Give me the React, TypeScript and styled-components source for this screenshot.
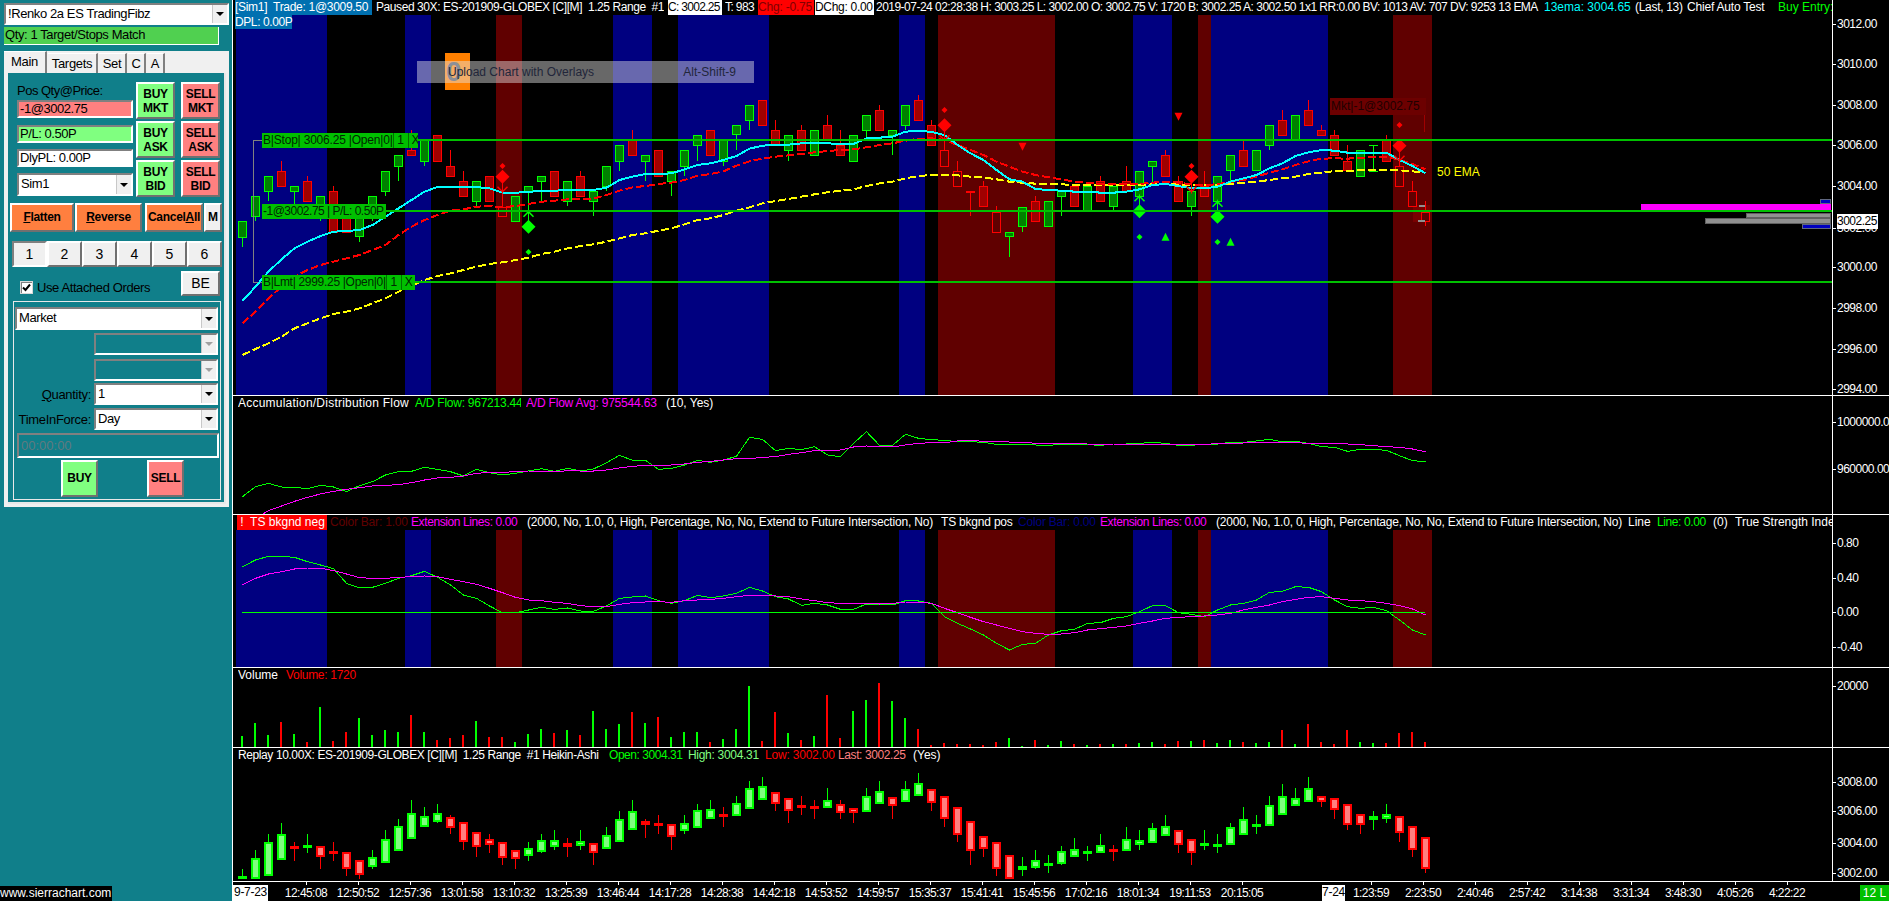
import React from "react";
import styled, { createGlobalStyle } from "styled-components";

const Global = createGlobalStyle`
  html, body { margin: 0; padding: 0; background: #000; overflow: hidden; }
  body { font-family: "Liberation Sans", Arial, sans-serif; }
  * { box-sizing: border-box; }
`;

const TEAL = "#107f8a";
const FACE = "#f0f0f0";
const sunken = "border: 2px solid; border-color: #808080 #fff #fff #808080;";
const raised = "border: 2px solid; border-color: #fff #707070 #707070 #fff;";

/* ------------------------------ layout ----------------------------- */
const Page = styled.div`
  display: flex;
  width: 1889px;
  height: 901px;
  background: #000;
  overflow: hidden;
`;
const Sidebar = styled.aside`
  flex: 0 0 232px;
  height: 901px;
  display: flex;
  flex-direction: column;
  background: ${TEAL};
  color: #000;
  font-size: 13px;
`;
const ChartArea = styled.main`
  flex: 1;
  display: flex;
  flex-direction: column;
  border-left: 1px solid #fff;
  min-width: 0;
`;
const Pane = styled.section<{ $h: number }>`
  display: flex;
  flex: 0 0 ${(p) => p.$h}px;
  height: ${(p) => p.$h}px;
  border-bottom: 1px solid #fff;
`;
const Plot = styled.div`
  position: relative;
  flex: 0 0 1599px;
  width: 1599px;
  display: flex;
  flex-direction: column;
  overflow: hidden;
`;
const Graph = styled.svg`
  display: block;
  flex: 1;
  min-height: 0;
  width: 1599px;
`;
const Axis = styled.div`
  position: relative;
  flex: 1;
  border-left: 1px solid #fff;
  overflow: hidden;
  font-size: 12px;
  color: #fff;
`;
const AxisMark = styled.span`
  position: absolute;
  left: 4px;
  transform: translateY(-50%);
  white-space: nowrap;
  line-height: 14px;
  letter-spacing: -0.5px;
  &::before {
    content: "";
    position: absolute;
    left: -4px;
    top: 7px;
    width: 3px;
    height: 1px;
    background: #fff;
  }
`;
const PriceTag = styled.span`
  position: absolute;
  left: 4px;
  top: 214px;
  width: 41px;
  height: 15px;
  line-height: 15px;
  background: #fff;
  color: #000;
  letter-spacing: -0.5px;
`;

/* ------------------------------ legends ---------------------------- */
const Legend = styled.div`
  flex: 0 0 15px;
  height: 15px;
  display: flex;
  font-size: 12px;
  line-height: 15px;
  white-space: pre;
  overflow: hidden;
`;
const Chip = styled.span<{ $ml: number; $w: number; $bg?: string; $c?: string; $ls?: number }>`
  flex: 0 0 ${(p) => p.$w}px;
  width: ${(p) => p.$w}px;
  margin-left: ${(p) => p.$ml}px;
  background: ${(p) => p.$bg ?? "transparent"};
  color: ${(p) => p.$c ?? "#fff"};
  letter-spacing: ${(p) => p.$ls ?? 0}px;
  overflow: hidden;
`;
const DplTag = styled.div`
  position: absolute;
  left: 2px;
  top: 15px;
  width: 57px;
  height: 14px;
  line-height: 14px;
  font-size: 12px;
  letter-spacing: -0.4px;
  white-space: nowrap;
  background: #0070b0;
  color: #fff;
`;

/* ------------------------------ overlays --------------------------- */
const OrderTag = styled.div<{ $top: number; $w: number }>`
  position: absolute;
  left: 29px;
  top: ${(p) => p.$top}px;
  width: ${(p) => p.$w}px;
  height: 15px;
  display: flex;
  background: #00c000;
  color: #002800;
  font-size: 12px;
  line-height: 15px;
  white-space: pre;
  overflow: hidden;
`;
const OrderCell = styled.span<{ $w: number }>`
  flex: 0 0 ${(p) => p.$w}px;
  width: ${(p) => p.$w}px;
  text-align: center;
  border-left: 1px solid #007000;
`;
const OrderMain = styled.span<{ $ls: number }>`
  flex: 1;
  padding-left: 1px;
  letter-spacing: ${(p) => p.$ls}px;
`;
const FillTag = styled.div`
  position: absolute;
  left: 1097px;
  top: 98px;
  width: 96px;
  height: 17px;
  line-height: 17px;
  font-size: 12px;
  background: #6c0000;
  color: #200000;
  padding-left: 1px;
  white-space: pre;
  overflow: hidden;
`;
const EmaTag = styled.span`
  position: absolute;
  left: 1204px;
  top: 165px;
  font-size: 12px;
  line-height: 15px;
  color: #ffff00;
`;
const OrangeBadge = styled.div`
  position: absolute;
  left: 212px;
  top: 53px;
  width: 25px;
  height: 37px;
  padding-left: 1px;
  background: #ff8000;
  color: #404858;
  font-weight: bold;
  font-size: 28px;
  line-height: 37px;
`;
const HintBar = styled.div`
  position: absolute;
  left: 184px;
  top: 61px;
  width: 337px;
  height: 22px;
  display: flex;
  justify-content: space-between;
  padding: 0 18px 0 31px;
  background: rgba(230, 230, 230, 0.45);
  color: #22263a;
  font-size: 12px;
  line-height: 22px;
`;

/* ------------------------------ time axis -------------------------- */
const TimeRow = styled.footer`
  flex: 0 0 19px;
  height: 19px;
  display: flex;
  font-size: 12px;
  color: #fff;
  line-height: 17px;
  white-space: nowrap;
`;
const DateTag = styled.span<{ $w: number; $ml?: number }>`
  flex: 0 0 ${(p) => p.$w}px;
  width: ${(p) => p.$w}px;
  height: 16px;
  margin-top: 3px;
  margin-left: ${(p) => p.$ml ?? 0}px;
  background: #fff;
  color: #000;
  line-height: 15px;
  text-align: center;
  letter-spacing: -0.3px;
`;
const TimeGap = styled.span<{ $w: number }>`
  flex: 0 0 ${(p) => p.$w}px;
`;
const TimeCell = styled.span`
  position: relative;
  flex: 0 0 52px;
  width: 52px;
  padding-top: 3px;
  text-align: center;
  letter-spacing: -0.55px;
  &::before {
    content: "";
    position: absolute;
    left: 26px;
    top: 0;
    width: 1px;
    height: 3px;
    background: #fff;
  }
`;
const BarCount = styled.span`
  margin-left: auto;
  flex: 0 0 29px;
  height: 16px;
  margin-top: 3px;
  background: #00c000;
  color: #fff;
  text-align: center;
  line-height: 16px;
`;

/* ------------------------------ sidebar ---------------------------- */
const Combo = styled.div<{ $w: number; $h?: number; $off?: boolean; $ml?: number; $mt?: number }>`
  position: relative;
  flex: none;
  width: ${(p) => p.$w}px;
  height: ${(p) => p.$h ?? 22}px;
  margin-left: ${(p) => p.$ml ?? 0}px;
  margin-top: ${(p) => p.$mt ?? 0}px;
  ${sunken}
  background: ${(p) => (p.$off ? TEAL : "#fff")};
  padding-left: 2px;
  line-height: 18px;
  font-size: 13px;
  letter-spacing: -0.4px;
  white-space: nowrap;
  display: flex;
  justify-content: space-between;
`;
const ComboArrow = styled.span<{ $off?: boolean }>`
  flex: 0 0 15px;
  width: 15px;
  height: 100%;
  background: ${FACE};
  border-left: 1px solid #c8c8c8;
  display: flex;
  align-items: center;
  justify-content: center;
  &::after {
    content: "";
    border-left: 4px solid transparent;
    border-right: 4px solid transparent;
    border-top: 4px solid ${(p) => (p.$off ? "#a0a0a0" : "#000")};
  }
`;
const Status = styled.div`
  flex: 0 0 18px;
  margin: 2px 0 0 4px;
  width: 215px;
  background: #50d050;
  border-right: 1px solid #fff;
  border-bottom: 1px solid #fff;
  font-size: 13px;
  letter-spacing: -0.4px;
  line-height: 16px;
  padding-left: 1px;
  white-space: nowrap;
  overflow: hidden;
`;
const TabFrame = styled.div`
  flex: 0 0 456px;
  width: 225px;
  margin: 6px 0 0 4px;
  background: ${FACE};
  display: flex;
  flex-direction: column;
`;
const TabStrip = styled.div`
  flex: 0 0 22px;
  display: flex;
  align-items: flex-end;
  gap: 1px;
`;
const Tab = styled.div<{ $w: number; $on?: boolean }>`
  flex: 0 0 ${(p) => p.$w}px;
  height: ${(p) => (p.$on ? 22 : 20)}px;
  background: ${FACE};
  border-right: 2px solid #808080;
  border-top: 1px solid #fff;
  text-align: center;
  font-size: 13px;
  letter-spacing: -0.3px;
  line-height: ${(p) => (p.$on ? 20 : 19)}px;
`;
const TabBody = styled.div`
  flex: 1;
  margin: 0 3px 3px 4px;
  background: ${TEAL};
  border-right: 2px solid #e8e8e8;
  border-bottom: 2px solid #e8e8e8;
  display: flex;
  flex-direction: column;
`;
const TopBlock = styled.div`
  display: flex;
  margin: 9px 0 0 9px;
  height: 116px;
`;
const PosColumn = styled.div`
  flex: 0 0 116px;
  display: flex;
  flex-direction: column;
`;
const FieldCaption = styled.div`
  flex: 0 0 18px;
  font-size: 13px;
  letter-spacing: -0.5px;
  line-height: 15px;
  padding-top: 1px;
`;
const Field = styled.div<{ $bg: string; $mt?: number }>`
  flex: 0 0 18px;
  margin-top: ${(p) => p.$mt ?? 0}px;
  ${sunken}
  background: ${(p) => p.$bg};
  font-size: 13px;
  letter-spacing: -0.45px;
  line-height: 14px;
  padding-left: 1px;
  white-space: nowrap;
`;
const OrderColumn = styled.div<{ $ml: number }>`
  flex: 0 0 39px;
  margin-left: ${(p) => p.$ml}px;
  display: flex;
  flex-direction: column;
  gap: 2px;
`;
const OrderButton = styled.div<{ $bg: string }>`
  flex: 0 0 37px;
  ${raised}
  background: ${(p) => p.$bg};
  font-weight: bold;
  font-size: 12px;
  line-height: 14px;
  text-align: center;
  padding-top: 3px;
  letter-spacing: -0.3px;
`;
const ActionRow = styled.div`
  display: flex;
  margin: 5px 0 0 2px;
  height: 29px;
`;
const ActionButton = styled.div<{ $w: number; $ml?: number; $plain?: boolean }>`
  flex: 0 0 ${(p) => p.$w}px;
  margin-left: ${(p) => p.$ml ?? 0}px;
  ${raised}
  background: ${(p) => (p.$plain ? FACE : "#ff7f3f")};
  font-weight: bold;
  font-size: 12px;
  line-height: 25px;
  text-align: center;
  letter-spacing: ${(p) => (p.$plain ? 0 : -0.3)}px;
  white-space: nowrap;
`;
const SlotRow = styled.div`
  display: flex;
  margin: 9px 0 0 4px;
  height: 26px;
`;
const SlotButton = styled.div<{ $on?: boolean }>`
  flex: 0 0 35px;
  ${(p) => (p.$on ? "border: 2px solid; border-color: #808080 #fff #fff #808080;" : raised)}
  background: ${FACE};
  font-size: 14px;
  line-height: 22px;
  text-align: center;
`;
const AttachRow = styled.div`
  display: flex;
  align-items: flex-start;
  margin: 4px 0 0 12px;
  height: 25px;
`;
const CheckBox = styled.span`
  flex: 0 0 13px;
  height: 13px;
  margin-top: 10px;
  background: #fff;
  border: 1px solid #d8d8d8;
  box-shadow: inset 1px 1px 0 #808080;
  display: flex;
  align-items: center;
  justify-content: center;
`;
const CheckLabel = styled.span`
  margin: 9px 0 0 4px;
  font-size: 13px;
  letter-spacing: -0.4px;
  line-height: 15px;
  white-space: nowrap;
  flex: 1;
`;
const BeButton = styled.div`
  flex: 0 0 39px;
  height: 25px;
  margin-right: 4px;
  ${raised}
  background: ${FACE};
  font-size: 14px;
  line-height: 20px;
  text-align: center;
`;
const GroupBox = styled.div`
  width: 208px;
  height: 199px;
  margin: 5px 0 0 5px;
  border: 1px solid #e8e8e8;
  padding: 5px 0 0 1px;
  display: flex;
  flex-direction: column;
`;
const FormRow = styled.div<{ $mt: number }>`
  display: flex;
  align-items: center;
  justify-content: flex-end;
  margin: ${(p) => p.$mt}px 2px 0 0;
  height: 22px;
  flex: 0 0 22px;
`;
const FormLabel = styled.span`
  font-size: 13px;
  letter-spacing: -0.3px;
  margin-right: 3px;
  white-space: nowrap;
`;
const TimeField = styled.div`
  flex: 0 0 25px;
  margin: 3px 1px 0 2px;
  ${sunken}
  color: #607a80;
  font-size: 13px;
  line-height: 21px;
  padding-left: 2px;
`;
const SubmitRow = styled.div`
  display: flex;
  margin: 2px 0 0 46px;
  gap: 49px;
`;
const SubmitButton = styled.div<{ $bg: string }>`
  flex: 0 0 37px;
  height: 37px;
  ${raised}
  background: ${(p) => p.$bg};
  font-weight: bold;
  font-size: 12px;
  letter-spacing: -0.3px;
  line-height: 33px;
  text-align: center;
`;
const SiteTag = styled.div`
  margin-top: auto;
  width: 112px;
  height: 15px;
  background: #000;
  color: #fff;
  font-size: 12px;
  line-height: 15px;
  white-space: nowrap;
`;

/* -------------------------------- data ----------------------------- */
type Bar = [string, number, number, number?, number?, number?];
const X = (i: number) => 242.5 + 13 * i;
const mainBars: Bar[] = [
  ["g",664,713,0,740],["g",589,650,0,662],["g",529,575,0,603],["r",514,560,484],["g",559,575,0,612],["r",544,605,529],["g",589,635,0,662],["r",574,698,559],
  ["r",650,698],["g",650,712,0,725],["g",589,650,0,662],["g",514,575,0,587],["g",466,500,0,543],["r",451,467,390],["g",420,485,0,497],["r",405,485],
  ["r",499,530,450],["r",544,590,514],["g",544,605,0,620],["r",529,605],["r",620,650,575,0,1],["g",589,665],["g",559,575,0,635],["g",529,545,0,603],
  ["r",514,590],["g",544,605,0,617],["r",529,590,514],["g",574,605,0,647],["g",499,560,0,572],["g",436,485,0,512],["r",420,467,390],["g",466,485,0,543],
  ["r",451,530],["g",514,545,0,587],["g",451,500,0,527],["g",405,437,0,483],["r",390,467],["g",420,485,0,497],["g",375,405,0,450],["g",315,362,0,390],
  ["r",300,377],["r",390,435,360],["g",405,452,0,483],["r",390,452,375],["g",390,467],["r",375,420,345],["r",436,467,390],["g",405,485],
  ["g",345,392,0,420],["r",330,392,315],["g",390,407,0,465],["g",315,377,0,390],["r",300,362,285],["r",375,437,360],["r",450,500,405,0,1],["r",514,560,484,0,1],
  ["r",574,576,574,647],["r",558,620,543],["r",635,698,618,0,1],["g",697,712,0,770],["g",620,680,0,695],["r",604,665,588],["g",604,680],["g",574,590,0,647],
  ["r",559,620],["g",559,632],["r",544,605,529],["g",559,620,0,632],["r",544,575,499],["g",514,590],["g",484,500,0,545],["r",466,530,450],
  ["r",544,605,529],["g",574,620,0,647],["r",559,590,514],["g",529,605],["g",466,514,0,545],["r",451,500,423],["g",451,514],["g",376,437,0,450],
  ["r",360,407,330],["g",345,420],["r",330,377,300],["r",390,407,375],["r",405,467,390],["r",484,512,435],["g",451,530],["g",436,512,436,512,2],
  ["r",420,485,405],["r",498,560,465,0,1],["r",574,620,544,0,1],["r",635,665,604,678,1],
];
const haBars: Bar[] = [
  ["g",408,416,388],["g",355,417,330],["g",307,407,282],["g",283,359,250],["r",319,326,307,362],["g",316,323,282,338],["r",319,350,0,387],["r",333,339,306,362],
  ["r",337,388,0,407],["r",361,404,0,416],["g",352,382,330,386],["g",298,368,270],["g",259,334,237],["g",220,296,180],["g",229,260,202],["g",220,245,192,248],
  ["r",232,265,225,282],["r",247,307,0,330],["r",277,322,0,350],["r",298,314,282,338],["r",307,355,0,374],["r",331,358,0,386],["g",325,347,306,362],["g",301,335,282,338],
  ["g",301,320,270,330],["r",310,322,294,351],["g",304,317,270,329],["r",310,338,0,374],["g",286,326,262],["g",238,305,213],["g",214,271,180],["r",244,256,237,294],
  ["r",250,257,225,282],["r",253,292,0,330],["g",250,272,225,282],["g",211,263,192],["g",208,236,180],["r",223,230,200,262],["g",190,227,168],["g",145,208,123],
  ["g",139,179,111],["r",157,193,0,213],["r",175,214,0,250],["r",196,199,168,225],["r",199,208,180,237],["g",181,203,145],["r",193,218,180,237],["r",205,220,0,250],
  ["g",169,215,145],["g",154,191,123],["r",172,197,0,238],["g",148,185,123],["g",130,167,99],["r",148,190,0,213],["r",169,238,0,261],["r",202,284,0,306],
  ["r",244,334,0,375],["r",289,328,0,351],["r",307,386,0,407],["r",346,417],["g",379,389,351,407],["g",361,383,330,386],["g",370,374,345,398],["g",334,372,318,374],
  ["g",328,352,294],["g",334,341,318,362],["g",316,338,282],["r",328,334,316,362],["g",298,332,262],["g",301,314,270,330],["g",265,308,250],["g",259,287,225],
  ["r",271,316,0,339],["r",296,340,0,374],["g",310,317,270,330],["g",312,314,282,338],["g",262,314,250],["g",238,286,202],["g",253,262,225,282],["g",196,257,168],
  ["g",169,226,132],["g",175,197,145],["g",145,187,111],["r",167,187,0,200],["r",175,211,0,237],["r",193,254,0,270],["r",223,256,0,282],["g",229,239,213,270],
  ["g",223,236,192,250],["r",229,280,0,306],["r",257,331,0,351],["r",292,387,0,398],
];
const cyan = [903,860,815,778,745,725,708,695,693,690,675,650,625,600,575,561,561,561,561,565,578,578,576,572,572,570,570,570,563,540,530,522,522,520,508,495,490,480,468,446,437,434,434,430,428,430,432,432,415,413,410,395,392,396,405,435,460,480,510,538,545,567,570,572,575,575,578,578,575,568,555,552,558,565,565,560,545,535,525,505,490,468,457,450,452,458,458,458,458,480,498,520];
const redEma = [970,935,895,860,830,810,795,785,775,765,750,735,705,680,660,645,632,628,620,618,622,618,612,605,602,598,596,596,585,572,562,558,552,548,540,527,522,514,497,484,476,470,466,462,457,453,450,448,442,435,430,422,416,415,420,435,450,465,485,500,515,525,532,538,545,548,552,552,552,552,548,545,548,553,556,552,546,540,530,518,508,495,484,476,475,476,473,472,470,480,492,508];
const yellow = [1065,1047,1030,1010,985,970,955,942,935,925,910,895,875,858,840,828,820,810,800,792,787,780,773,762,755,745,738,733,725,715,705,700,692,685,673,660,655,645,632,622,610,603,597,590,583,577,572,568,558,550,545,535,528,525,524,526,530,532,538,545,548,551,552,553,555,556,556,556,556,556,553,552,553,555,555,555,551,549,545,540,535,530,522,518,513,512,511,510,510,511,514,518];
const adGreen = [320,290,280,291,292,296,286,291,305,287,275,255,245,244,232,238,245,258,238,248,255,250,243,236,244,235,243,237,218,196,211,211,238,235,225,211,217,210,199,142,148,182,175,179,170,195,200,160,125,166,166,133,145,149,151,155,155,157,163,163,163,165,166,163,163,164,166,162,162,160,157,160,166,166,162,162,157,157,153,148,156,154,160,170,172,184,178,178,181,197,212,215];
const adPurple = [400,385,362,348,334,322,312,304,298,293,288,286,284,278,270,264,262,258,250,247,247,245,243,243,246,242,243,243,240,234,229,226,226,225,222,217,214,210,206,206,202,200,193,188,182,182,180,171,168,170,171,165,160,158,158,153,151,154,155,156,156,160,160,160,161,162,163,162,162,162,162,162,163,163,163,161,161,159,158,157,157,158,160,160,160,162,164,167,170,172,177,185];
const tsGreen = [530,510,499,499,502,515,525,536,580,594,592,580,565,557,544,562,585,615,625,648,668,668,660,652,658,654,663,664,648,625,621,618,632,640,632,616,623,618,610,592,603,620,627,646,640,645,658,658,642,642,645,632,633,640,680,700,717,735,760,780,763,760,735,722,718,700,698,685,680,665,647,647,668,673,680,660,645,640,630,607,604,590,592,605,630,650,655,652,662,690,720,735];
const tsPurple = [584,565,552,545,537,534,534,542,552,563,565,565,562,560,558,560,568,575,583,595,608,622,630,632,637,640,647,650,650,643,638,636,635,637,632,630,628,625,620,616,616,618,620,627,632,638,640,640,640,642,640,636,636,640,655,668,682,695,705,715,725,730,733,732,728,720,716,712,708,700,693,685,682,680,678,675,670,660,652,645,635,628,622,620,625,630,632,635,640,647,657,675];
const vol: [string, number][] = "g213 g174 g210 r171 g207 r231 g126 r228 r201 g159 g210 g195 g201 r150 g201 r225 r219 r210 g168 r216 r216 g231 g207 g192 r204 g195 r210 g138 g192 g177 r141 g174 r156 g216 g201 g201 r231 g222 g192 g63 r228 r141 g204 r225 g213 r90 r219 g138 g105 r54 g108 g159 r192 r240 r234 r237 r237 r240 r231 g219 g243 r225 g240 g228 r237 g240 r237 g237 r237 g234 g231 r237 r228 g228 r225 g234 g225 r231 g234 g231 r195 g237 r177 r231 r237 r195 g231 g234 r234 r204 r201 r231"
  .split(" ")
  .map((s) => [s[0], Number(s.slice(1))]);
const bands: [string, number, number][] = [
  ["b",0,7],["b",13,15],["r",20,22],["b",29,32],["b",34,41],["b",51,53],["r",54,63],["b",69,72],["r",74,75],["b",75,84],["r",89,92],
];
const BLUE = "#000080";
const MAROON = "#600000";

const pts = (ys: number[], off: number) => ys.map((z, i) => `${X(i)},${off + z / 3}`).join(" ");

function Bands({ y, h }: { y: number; h: number }) {
  return (
    <>
      {bands.map(([c, a, b]) => (
        <rect key={a} x={236 + 13 * a} y={y} width={13 * (b - a)} height={h} fill={c === "b" ? BLUE : MAROON} shapeRendering="crispEdges" />
      ))}
    </>
  );
}

function Candles({ bars, off, border, fills, thick }: { bars: Bar[]; off: number; border: Record<string, string>; fills: Record<string, string>; thick?: boolean }) {
  const Y = (z: number) => Math.round(off + z / 3);
  return (
    <g shapeRendering="crispEdges">
      {bars.map(([c, t, b, wt, wb, mode], i) => {
        const col = border[c];
        const left = 238 + 13 * i;
        const top = Y(t);
        const bot = Y(b);
        return (
          <g key={i}>
            <rect x={left + 4} y={wt ? Y(wt) : top} width={1} height={Math.max(0, (wb ? Y(wb) : bot) - (wt ? Y(wt) : top))} fill={col} />
            {mode === 2 ? (
              <>
                <rect x={left} y={top} width={9} height={1} fill={col} />
                <rect x={left} y={bot} width={9} height={1} fill={col} />
              </>
            ) : thick ? (
              <>
                <rect x={left} y={top} width={9} height={Math.max(3, bot - top)} fill={col} />
                <rect x={left + 2} y={top + 2} width={5} height={Math.max(0, bot - top - 4)} fill={fills[c]} />
              </>
            ) : (
              <rect x={left + 0.5} y={top + 0.5} width={8} height={Math.max(1, bot - top - 1)} fill={mode === 1 ? (i > 85 || i < 60 ? MAROON : "none") : fills[c]} stroke={col} strokeWidth={1} />
            )}
          </g>
        );
      })}
    </g>
  );
}

const poly = (pp: number[][]) => pp.map((p) => p.join(",")).join(" ");
function Diamond({ x, z, r, c }: { x: number; z: number; r: number; c: string }) {
  const y = z / 3;
  return <polygon points={poly([[x - r, y], [x, y - r], [x + r, y], [x, y + r]])} fill={c} />;
}
function Tri({ x, z, c, up }: { x: number; z: number; c: string; up?: boolean }) {
  const y = z / 3;
  return <polygon points={up ? poly([[x, y - 4], [x + 4, y + 4], [x - 4, y + 4]]) : poly([[x - 4, y - 4], [x + 4, y - 4], [x, y + 4]])} fill={c} />;
}
function SellSignal({ i, big, small }: { i: number; big: number; small: number }) {
  const x = X(i);
  const y = big / 3;
  return (
    <g>
      <Diamond x={x} z={small} r={3} c="#ff0000" />
      <Diamond x={x} z={big} r={7} c="#ff0000" />
      <polyline points={poly([[x, y], [x, y + 17]])} stroke="#ff0000" fill="none" />
      <polyline points={poly([[x - 5, y + 10], [x, y + 15], [x + 5, y + 10]])} stroke="#ff0000" strokeWidth={1.5} fill="none" />
    </g>
  );
}
function BuySignal({ i, big, small }: { i: number; big: number; small: number }) {
  const x = X(i);
  const y = big / 3;
  return (
    <g>
      <Diamond x={x} z={small} r={3} c="#00ff00" />
      <Diamond x={x} z={big} r={7} c="#00ff00" />
      <polyline points={poly([[x, y], [x, y - 17]])} stroke="#00ff00" fill="none" />
      <polyline points={poly([[x - 5, y - 10], [x, y - 15], [x + 5, y - 10]])} stroke="#00ff00" strokeWidth={1.5} fill="none" />
    </g>
  );
}

const Mark = ({ y, t }: { y: number; t: string }) => <AxisMark style={{ top: y }}>{t}</AxisMark>;

const upperTimes = ["12:45:08","12:50:52","12:57:36","13:01:58","13:10:32","13:25:39","13:46:44","14:17:28","14:28:38","14:42:18","14:53:52","14:59:57","15:35:37","15:41:41","15:45:56","17:02:16","18:01:34","19:11:53","20:15:05"];
const lowerTimes = ["1:23:59","2:23:50","2:40:46","2:57:42","3:14:38","3:31:34","3:48:30","4:05:26","4:22:22"];

type ChipData = [string, number, number, string?, string?, number?];
const mainChips: ChipData[] = [
  ["[Sim1]  Trade: 1@3009.50", 2, 137, "#0070b0", undefined, -0.3],
  ["Paused 30X: ES-201909-GLOBEX [C][M]  1.25 Range  #1", 4, 288, undefined, undefined, -0.42],
  ["C: 3002.25", 4, 54, "#fff", "#000", -0.7],
  ["T: 983", 3, 33, undefined, undefined, -0.6],
  ["Chg: -0.75", 0, 56, "#ff0000", "#800000", -0.2],
  ["DChg: 0.00", 1, 59, "#fff", "#000", -0.3],
  ["2019-07-24 02:28:38 H: 3003.25 L: 3002.00 O: 3002.75 V: 1720 B: 3002.25 A: 3002.50 1x1 RR:0.00 BV: 1013 AV: 707 DV: 9253 13 EMA", 2, 666, undefined, undefined, -0.52],
  ["13ema: 3004.65", 2, 88, undefined, "#00ffff"],
  ["(Last, 13)", 3, 49, undefined, undefined, -0.3],
  ["Chief Auto Test", 3, 88, undefined, undefined, -0.2],
  ["Buy Entry: 0", 3, 58, undefined, "#00ff00"],
];
const adChips: ChipData[] = [
  ["Accumulation/Distribution Flow", 5, 172, undefined, undefined, 0.23],
  ["A/D Flow: 967213.44", 5, 106, undefined, "#00ff00", -0.25],
  ["A/D Flow Avg: 975544.63", 5, 135, undefined, "#ff00ff", -0.2],
  ["(10, Yes)", 5, 48],
];
const PARAMS = "(2000, No, 1.0, 0, High, Percentage, No, No, Extend to Future Intersection, No)";
const tsChips: ChipData[] = [
  [" !  TS bkgnd neg", 4, 90, "#ff0000"],
  ["Color Bar: 1.00", 3, 78, undefined, "#600000", -0.2],
  ["Extension Lines: 0.00", 3, 110, undefined, "#ff00ff", -0.4],
  [PARAMS, 6, 410, undefined, undefined, -0.17],
  ["TS bkgnd pos", 4, 74, undefined, undefined, -0.2],
  ["Color Bar: 0.00", 3, 78, undefined, "#000080", -0.2],
  ["Extension Lines: 0.00", 4, 110, undefined, "#ff00ff", -0.4],
  [PARAMS, 6, 408, undefined, undefined, -0.17],
  ["Line", 4, 24],
  ["Line: 0.00", 5, 52, undefined, "#00ff00", -0.4],
  ["(0)", 4, 18],
  ["True Strength Index", 4, 100],
];
const volChips: ChipData[] = [
  ["Volume", 5, 42],
  ["Volume: 1720", 6, 72, undefined, "#ff0000", -0.3],
];
const haChips: ChipData[] = [
  ["Replay 10.00X: ES-201909-GLOBEX [C][M]  1.25 Range  #1 Heikin-Ashi", 5, 366, undefined, undefined, -0.4],
  ["Open: 3004.31", 5, 74, undefined, "#00ff00", -0.45],
  ["High: 3004.31", 5, 73, undefined, "#80ff80", -0.3],
  ["Low: 3002.00", 4, 70, undefined, "#ff0000", -0.2],
  ["Last: 3002.25", 3, 68, undefined, "#ff8080", -0.4],
  ["(Yes)", 7, 30],
];

function Chips({ items }: { items: ChipData[] }) {
  return (
    <Legend>
      {items.map(([t, ml, w, bg, c, ls], i) => (
        <Chip key={i} $ml={ml} $w={w} $bg={bg} $c={c} $ls={ls}>{t}</Chip>
      ))}
    </Legend>
  );
}

export default function App() {
  return (
    <Page>
      <Global />
      <Sidebar>
        <Combo $w={225} $h={22} $ml={4} $mt={3}>
          !Renko 2a ES TradingFibz
          <ComboArrow />
        </Combo>
        <Status>Qty: 1 Target/Stops Match</Status>
        <TabFrame>
          <TabStrip>
            <Tab $w={43} $on>Main</Tab>
            <Tab $w={50}>Targets</Tab>
            <Tab $w={28}>Set</Tab>
            <Tab $w={18}>C</Tab>
            <Tab $w={18}>A</Tab>
          </TabStrip>
          <TabBody>
            <TopBlock>
              <PosColumn>
                <FieldCaption>Pos Qty@Price:</FieldCaption>
                <Field $bg="#ff8080">-1@3002.75</Field>
                <Field $bg="#80ff80" $mt={7}>P/L: 0.50P</Field>
                <Field $bg="#fff" $mt={6}>DlyPL: 0.00P</Field>
                <Combo $w={116} $h={23} $mt={6}>Sim1<ComboArrow /></Combo>
              </PosColumn>
              <OrderColumn $ml={3}>
                <OrderButton $bg="#80ff80">BUY<br />MKT</OrderButton>
                <OrderButton $bg="#80ff80">BUY<br />ASK</OrderButton>
                <OrderButton $bg="#80ff80">BUY<br />BID</OrderButton>
              </OrderColumn>
              <OrderColumn $ml={6}>
                <OrderButton $bg="#ff8080">SELL<br />MKT</OrderButton>
                <OrderButton $bg="#ff8080">SELL<br />ASK</OrderButton>
                <OrderButton $bg="#ff8080">SELL<br />BID</OrderButton>
              </OrderColumn>
            </TopBlock>
            <ActionRow>
              <ActionButton $w={64}><u>F</u>latten</ActionButton>
              <ActionButton $w={67} $ml={1}><u>R</u>everse</ActionButton>
              <ActionButton $w={58} $ml={3}>Cancel<u>A</u>ll</ActionButton>
              <ActionButton $w={18} $ml={1} $plain>M</ActionButton>
            </ActionRow>
            <SlotRow>
              <SlotButton $on>1</SlotButton>
              <SlotButton>2</SlotButton>
              <SlotButton>3</SlotButton>
              <SlotButton>4</SlotButton>
              <SlotButton>5</SlotButton>
              <SlotButton>6</SlotButton>
            </SlotRow>
            <AttachRow>
              <CheckBox>
                <svg width="9" height="9" viewBox="0 0 9 9"><path d="M1 4.5 L3.5 7 L8 1.5" stroke="#000" strokeWidth="2" fill="none" /></svg>
              </CheckBox>
              <CheckLabel>Use Attached Orders</CheckLabel>
              <BeButton>BE</BeButton>
            </AttachRow>
            <GroupBox>
              <Combo $w={203} $h={23}>Market<ComboArrow /></Combo>
              <FormRow $mt={3}><Combo $w={124} $h={22} $off><span /><ComboArrow $off /></Combo></FormRow>
              <FormRow $mt={4}><Combo $w={124} $h={22} $off><span /><ComboArrow $off /></Combo></FormRow>
              <FormRow $mt={2}>
                <FormLabel><u>Q</u>uantity:</FormLabel>
                <Combo $w={124} $h={22}>1<ComboArrow /></Combo>
              </FormRow>
              <FormRow $mt={3}>
                <FormLabel>TimeInForce:</FormLabel>
                <Combo $w={124} $h={22}>Day<ComboArrow /></Combo>
              </FormRow>
              <TimeField>00:00:00</TimeField>
              <SubmitRow>
                <SubmitButton $bg="#80ff80">BUY</SubmitButton>
                <SubmitButton $bg="#ff8080">SELL</SubmitButton>
              </SubmitRow>
            </GroupBox>
          </TabBody>
        </TabFrame>
        <SiteTag>www.sierrachart.com</SiteTag>
      </Sidebar>

      <ChartArea>
        <Pane $h={396}>
          <Plot>
            <Chips items={mainChips} />
            <Graph viewBox="233 15 1599 380">
              <Bands y={15} h={380} />
              <rect x={1413} y={205} width={17} height={17} fill="#7a0000" shapeRendering="crispEdges" />
              <rect x={1424} y={115} width={1} height={17} fill="#a00000" shapeRendering="crispEdges" />
              <Candles bars={mainBars} off={0} border={{ g: "#00ff00", r: "#ff0000" }} fills={{ g: "#008000", r: "#a00000" }} />
              <polyline points={poly([[262, 140], [253, 140], [253, 282], [262, 282]])} stroke="#808080" fill="none" shapeRendering="crispEdges" />
              <polyline points={pts(yellow, 0)} stroke="#ffff00" strokeWidth={2} strokeDasharray="8 3" fill="none" shapeRendering="crispEdges" />
              <polyline points={pts(redEma, 0)} stroke="#ff0000" strokeWidth={2} strokeDasharray="8 3" fill="none" shapeRendering="crispEdges" />
              <polyline points={pts(cyan, 0)} stroke="#00ffff" strokeWidth={2} fill="none" shapeRendering="crispEdges" />
              <SellSignal i={20} big={530} small={498} />
              <BuySignal i={22} big={680} small={756} />
              <SellSignal i={54} big={376} small={330} />
              <BuySignal i={69} big={634} small={711} />
              <SellSignal i={73} big={530} small={498} />
              <BuySignal i={75} big={650} small={726} />
              <SellSignal i={89} big={437} small={375} />
              <Tri x={X(60)} z={440} c="#ff0000" />
              <Tri x={X(72)} z={350} c="#ff0000" />
              <Tri x={X(71)} z={710} c="#00ff00" up />
              <Tri x={X(76)} z={725} c="#00ff00" up />
              <g shapeRendering="crispEdges">
                <rect x={1641} y={204} width={190} height={6} fill="#ff00ff" />
                <rect x={1820.5} y={199.5} width={10} height={4} fill="#0000c0" stroke="#606880" />
                <rect x={1785} y={210} width={46} height={2} fill="#708070" />
                <rect x={1746.5} y={213.5} width={84} height={4} fill="#909090" stroke="#606060" />
                <rect x={1705.5} y={218.5} width={125} height={5} fill="#909090" stroke="#606060" />
                <rect x={1802.5} y={224.5} width={28} height={4} fill="#0000c0" stroke="#606880" />
                <rect x={1419} y={205} width={6} height={2} fill="#909090" />
                <rect x={1418} y={220} width={7} height={2} fill="#909090" />
                <rect x={262} y={139} width={1570} height={2} fill="#00c000" />
                <rect x={262} y={210} width={1570} height={2} fill="#00c000" />
                <rect x={262} y={281} width={1570} height={2} fill="#00c000" />
              </g>
            </Graph>
            <DplTag>DPL: 0.00P</DplTag>
            <OrangeBadge>0</OrangeBadge>
            <HintBar><span>Upload Chart with Overlays</span><span>Alt-Shift-9</span></HintBar>
            <OrderTag $top={133} $w={156}>
              <OrderMain $ls={-0.2}>B|Stop| 3006.25 |Open|0|</OrderMain><OrderCell $w={15}>1</OrderCell><OrderCell $w={15}>X</OrderCell>
            </OrderTag>
            <OrderTag $top={204} $w={124}>
              <OrderMain $ls={-0.5}>-1@3002.75 | P/L: 0.50P</OrderMain>
            </OrderTag>
            <OrderTag $top={275} $w={153}>
              <OrderMain $ls={-0.3}>B|Lmt| 2999.25 |Open|0|</OrderMain><OrderCell $w={15}>1</OrderCell><OrderCell $w={15}>X</OrderCell>
            </OrderTag>
            <FillTag>Mkt|-1@3002.75</FillTag>
            <EmaTag>50 EMA</EmaTag>
          </Plot>
          <Axis>
            <Mark y={24} t="3012.00" />
            <Mark y={64} t="3010.00" />
            <Mark y={105} t="3008.00" />
            <Mark y={145} t="3006.00" />
            <Mark y={186} t="3004.00" />
            <Mark y={228} t="3002.00" />
            <Mark y={267} t="3000.00" />
            <Mark y={308} t="2998.00" />
            <Mark y={349} t="2996.00" />
            <Mark y={389} t="2994.00" />
            <PriceTag>3002.25</PriceTag>
          </Axis>
        </Pane>

        <Pane $h={119}>
          <Plot>
            <Chips items={adChips} />
            <Graph viewBox="233 411 1599 103">
              <polyline points={pts(adGreen, 390)} stroke="#00ff00" fill="none" shapeRendering="crispEdges" />
              <polyline points={pts(adPurple, 390)} stroke="#ff00ff" fill="none" shapeRendering="crispEdges" />
            </Graph>
          </Plot>
          <Axis>
            <Mark y={26} t="1000000.00" />
            <Mark y={73} t="960000.00" />
          </Axis>
        </Pane>

        <Pane $h={153}>
          <Plot>
            <Chips items={tsChips} />
            <Graph viewBox="233 530 1599 137">
              <Bands y={530} h={137} />
              <polyline points={pts(tsGreen, 390)} stroke="#00ff00" fill="none" shapeRendering="crispEdges" />
              <polyline points={pts(tsPurple, 390)} stroke="#ff00ff" fill="none" shapeRendering="crispEdges" />
              <rect x={242} y={612} width={1183} height={1} fill="#00ff00" shapeRendering="crispEdges" />
            </Graph>
          </Plot>
          <Axis>
            <Mark y={28} t="0.80" />
            <Mark y={63} t="0.40" />
            <Mark y={97} t="0.00" />
            <Mark y={132} t="-0.40" />
          </Axis>
        </Pane>

        <Pane $h={80}>
          <Plot>
            <Chips items={volChips} />
            <Graph viewBox="233 683 1599 64">
              <g shapeRendering="crispEdges">
                {vol.map(([c, t], i) => (
                  <rect key={i} x={241 + 13 * i} y={665 + t / 3} width={2} height={(247 - t) / 3} fill={c === "g" ? "#00ff00" : "#ff0000"} />
                ))}
              </g>
            </Graph>
          </Plot>
          <Axis>
            <Mark y={18} t="20000" />
          </Axis>
        </Pane>

        <Pane $h={134}>
          <Plot>
            <Chips items={haChips} />
            <Graph viewBox="233 763 1599 118">
              <Candles bars={haBars} off={740} border={{ g: "#00ff00", r: "#ff0000" }} fills={{ g: "#80ff80", r: "#ff8080" }} thick />
            </Graph>
          </Plot>
          <Axis>
            <Mark y={34} t="3008.00" />
            <Mark y={63} t="3006.00" />
            <Mark y={95} t="3004.00" />
            <Mark y={125} t="3002.00" />
          </Axis>
        </Pane>

        <TimeRow>
          <DateTag $w={35}>9-7-23</DateTag>
          <TimeGap $w={12} />
          {upperTimes.map((t) => <TimeCell key={t}>{t}</TimeCell>)}
          <DateTag $w={23} $ml={54}>7-24</DateTag>
          {lowerTimes.map((t) => <TimeCell key={t}>{t}</TimeCell>)}
          <BarCount>12 L</BarCount>
        </TimeRow>
      </ChartArea>
    </Page>
  );
}
